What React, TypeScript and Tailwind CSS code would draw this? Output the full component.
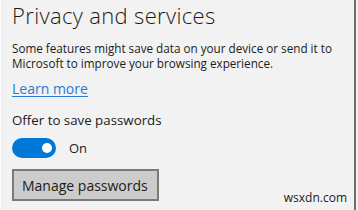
export default function App() {
  return (
    <div className="w-[358px] h-[210px] bg-[#f2f2f2] relative overflow-hidden flex" style={{ fontFamily: '"Open Sans", "Noto Sans", sans-serif' }}>
      <div className="w-[3px] h-full bg-[#f8f8f8] border-r border-[#e6e6e6]" />
      <div className="flex-1 flex flex-col pl-[9px]">
        <div className="text-[22px] leading-[30px] tracking-[0.35px] font-light text-[#1b1b1b] whitespace-nowrap">Privacy and services</div>
        <div className="mt-[11px] text-[11.7px] leading-[15px] text-[#1b1b1b] w-[335px]">
          Some features might save data on your device or send it to Microsoft to improve your browsing experience.
        </div>
        <div className="mt-[8px] text-[14px] leading-[20px] text-[#2c7bd0] underline underline-offset-2">Learn more</div>
        <div className="mt-[12px] text-[13.3px] leading-[18px] text-[#1b1b1b]">Offer to save passwords</div>
        <div className="mt-[9px] flex items-center gap-[13px]">
          <div className="w-[44px] h-[20px] rounded-full bg-[#0078d7] flex items-center justify-end pr-[4px]">
            <div className="w-[10px] h-[10px] rounded-full bg-white" />
          </div>
          <span className="text-[13px] leading-[20px] text-[#1b1b1b]">On</span>
        </div>
        <div className="mt-[11px] w-[147px] h-[32px] border-2 border-[#7a7a7a] bg-[#cccccc] flex items-center pl-[8px] text-[14px] text-[#1b1b1b] whitespace-nowrap">
          Manage passwords
        </div>
      </div>
      <div className="w-[2px] h-full bg-[#707070] mr-[2px]" />
      <div className="absolute right-[11px] bottom-[5px] text-[12px] leading-[14px] text-[#222]">wsxdn.com</div>
    </div>
  );
}
